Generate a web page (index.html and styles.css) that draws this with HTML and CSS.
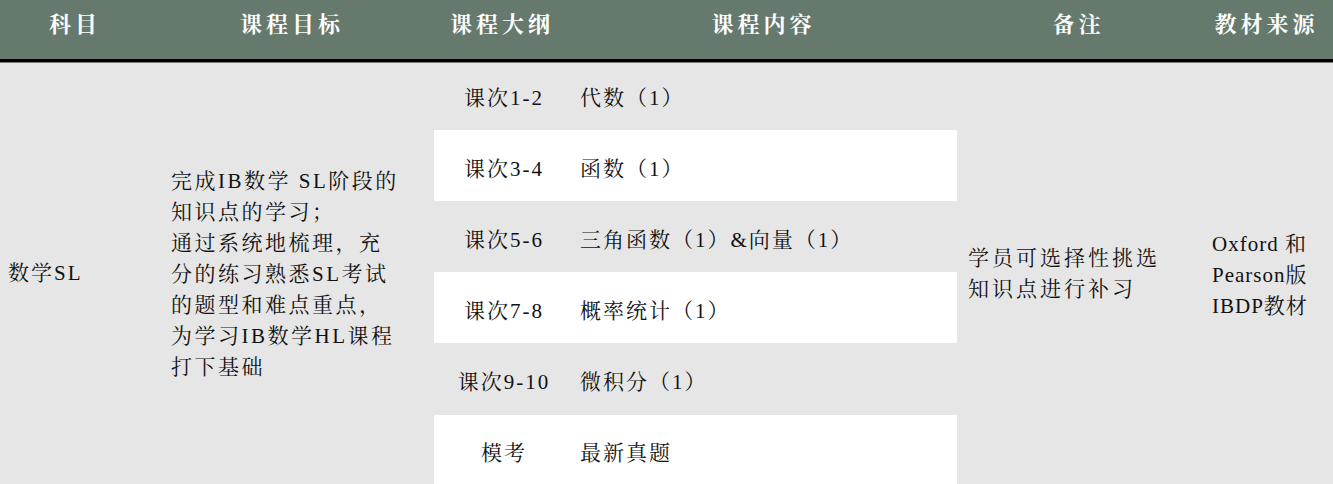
FILE: index.html
```html
<!DOCTYPE html>
<html lang="zh-CN">
<head>
<meta charset="utf-8">
<title>IB数学SL课程</title>
<link rel="stylesheet" href="styles.css">
</head>
<body>
<div class="table">
  <div class="head">
    <div class="th">科目</div>
    <div class="th">课程目标</div>
    <div class="th">课程大纲</div>
    <div class="th">课程内容</div>
    <div class="th">备注</div>
    <div class="th">教材来源</div>
  </div>
  <div class="body">
    <div class="cell subject">数学SL</div>
    <div class="cell goal">完成IB数学 SL阶段的<br>知识点的学习；<br>通过系统地梳理，充<br>分的练习熟悉SL考试<br>的题型和难点重点，<br>为学习IB数学HL课程<br>打下基础</div>
    <div class="outline">
      <div class="row r1"><span class="lesson">课次1-2</span><span class="topic">代数（1）</span></div>
      <div class="row r2 white"><span class="lesson">课次3-4</span><span class="topic">函数（1）</span></div>
      <div class="row r3"><span class="lesson">课次5-6</span><span class="topic">三角函数（1）&amp;向量（1）</span></div>
      <div class="row r4 white"><span class="lesson">课次7-8</span><span class="topic">概率统计（1）</span></div>
      <div class="row r5"><span class="lesson">课次9-10</span><span class="topic">微积分（1）</span></div>
      <div class="row r6 white"><span class="lesson">模考</span><span class="topic">最新真题</span></div>
    </div>
    <div class="cell note">学员可选择性挑选<br>知识点进行补习</div>
    <div class="cell source">Oxford 和<br>Pearson版<br>IBDP教材</div>
  </div>
</div>
</body>
</html>
```
FILE: styles.css
```css
* { box-sizing: border-box; }
html, body {
  margin: 0;
  padding: 0;
  background: #e6e6e6;
  width: 1333px;
  height: 484px;
  overflow: hidden;
}
body {
  font-family: "Liberation Serif", "Noto Serif CJK SC", "Noto Sans CJK SC", serif;
  color: #111;
  font-size: 21px;
}
.table {
  display: flex;
  flex-direction: column;
  width: 1333px;
}
.head {
  display: grid;
  grid-template-columns: 150px 284px 136px 387px 243px 133px;
  height: 62px;
  background: #66796d;
  border-bottom: 3px solid #000;
  box-shadow: 0 1px 0 #7a7a7a;
}
.th {
  color: #fff;
  font-weight: bold;
  font-size: 22px;
  letter-spacing: 4px;
  text-align: center;
  padding-top: 11px;
  line-height: 28px;
  white-space: nowrap;
}
.body {
  display: grid;
  grid-template-columns: 150px 284px 523px 243px 133px;
  height: 422px;
}
.cell {
  display: flex;
  align-items: center;
  line-height: 31px;
  white-space: nowrap;
  letter-spacing: 2.5px;
}
.subject { padding-left: 8px; letter-spacing: 2px; }
.goal { padding-left: 21px; padding-top: 2px; }
.note { padding-left: 11px; padding-top: 2px; letter-spacing: 3px; }
.source { padding-left: 12px; padding-top: 4px; letter-spacing: 1px; }
.outline {
  display: grid;
  grid-template-rows: 68px 71px 71px 71px 72px 69px;
}
.row {
  display: grid;
  grid-template-columns: 136px 1fr;
  align-items: center;
  padding-top: 2px;
  letter-spacing: 2px;
  white-space: nowrap;
}
.row.r1 { padding-top: 0; }
.row.white { background: #fff; }
.lesson {
  text-align: center;
  padding-left: 4px;
}
.topic {
  padding-left: 10px;
}
```
